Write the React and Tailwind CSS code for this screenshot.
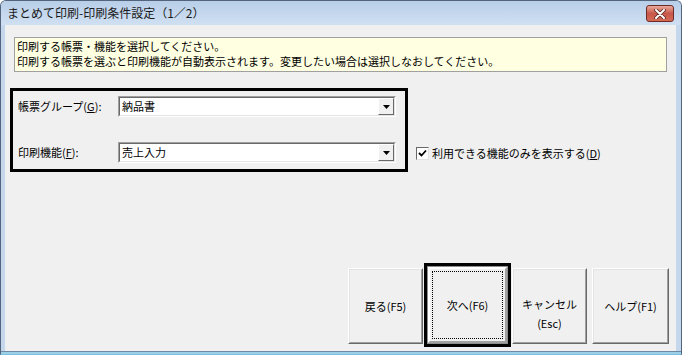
import React from 'react';

const FONT = "font-['Noto_Sans_CJK_JP','Noto_Sans',sans-serif]";

const DropButton = () => (
  <div className="w-[16px] h-[17px] flex items-center justify-center bg-[#f0f0f0] border border-t-white border-l-white border-b-[#696969] border-r-[#696969]">
    <svg width="7" height="4" viewBox="0 0 7 4">
      <polygon points="0,0 7,0 3.5,4" fill="#000" />
    </svg>
  </div>
);

const Combo = ({ value }) => (
  <div className="w-[278px] h-[21px] border border-t-[#a0a0a0] border-l-[#a0a0a0] border-b-white border-r-white">
    <div className="h-full flex items-center bg-white border border-t-[#696969] border-l-[#696969] border-b-[#e3e3e3] border-r-[#e3e3e3]">
      <span className="flex-1 pl-[2px] text-[11px] leading-[15px]">{value}</span>
      <DropButton />
    </div>
  </div>
);

const Field = ({ label, hotkey, rest, value }) => (
  <div className="flex items-center">
    <span className="w-[100px] text-[11px] leading-[15px]">
      {label}(<span className="underline">{hotkey}</span>){rest}
    </span>
    <Combo value={value} />
  </div>
);

const WinButton = ({ children, className = '' }) => (
  <div className={`w-[75px] h-[76px] mb-[3px] border border-t-white border-l-white border-b-[#696969] border-r-[#696969] ${className}`}>
    <div className="h-full bg-[#f0f0f0] border border-t-[#e3e3e3] border-l-[#e3e3e3] border-b-[#a0a0a0] border-r-[#a0a0a0] flex flex-col items-center justify-center text-[11px] leading-[19px]">
      {children}
    </div>
  </div>
);

export default function App() {
  return (
    <div className={`${FONT} w-[682px] h-[355px] flex flex-col bg-[#c4d7ed] border border-[#52657c] border-b-[#7fc0e0] rounded-t-[6px] overflow-hidden text-black`}>
      {/* タイトルバー */}
      <div className="h-[24px] flex items-center justify-between pl-[6px] pr-[7px] bg-gradient-to-b from-[#b8cee8] to-[#d0e0f2]">
        <span className="text-[12px] leading-[16px] text-[#1a1a1a]">まとめて印刷-印刷条件設定（1／2）</span>
        <div className="w-[28px] h-[17px] mt-[1px] rounded-[3px] border border-[#6e2b25] bg-gradient-to-b from-[#e9a99b] via-[#c7574a] to-[#d46a55] flex items-center justify-center">
          <svg width="12" height="10" viewBox="0 0 12 10">
            <path d="M2 1 L10 9 M10 1 L2 9" stroke="#5a2520" strokeWidth="3.6" strokeLinecap="round" />
            <path d="M2 1 L10 9 M10 1 L2 9" stroke="#fff" strokeWidth="2" strokeLinecap="round" />
          </svg>
        </div>
      </div>

      {/* 本体 */}
      <div className="flex-1 ml-[4px] mr-[5px] flex flex-col bg-[#f0f0f0]">
        <div className="mt-[12px] ml-[9px] w-[653px] h-[35px] border border-[#a0a0a0] bg-[#ffffe1] pl-[2px] pt-[1px] text-[11px] leading-[15px]">
          <div>印刷する帳票・機能を選択してください。</div>
          <div>印刷する帳票を選ぶと印刷機能が自動表示されます。変更したい場合は選択しなおしてください。</div>
        </div>

        <div className="mt-[16px] ml-[5px] flex items-end">
          <div className="w-[398px] h-[84px] border-[3px] border-black pt-[5px] pl-[5px] flex flex-col gap-[25px]">
            <Field label="帳票グループ" hotkey="G" rest=":" value="納品書" />
            <Field label="印刷機能" hotkey="F" rest=":" value="売上入力" />
          </div>
          <div className="ml-[8px] mb-[11px] flex items-center gap-[3px]">
            <div className="w-[13px] h-[13px] bg-white border border-t-[#696969] border-l-[#696969] border-b-[#e3e3e3] border-r-[#e3e3e3] flex items-center justify-center">
              <svg width="9" height="9" viewBox="0 0 9 9">
                <path d="M1 4 L3.5 6.5 L8 1.5" stroke="#000" strokeWidth="1.8" fill="none" />
              </svg>
            </div>
            <span className="text-[11px] leading-[15px]">
              利用できる機能のみを表示する(<span className="underline">D</span>)
            </span>
          </div>
        </div>

        <div className="flex-1" />

        {/* ボタン */}
        <div className="flex items-end justify-end pr-[7px] pb-[4px]">
          <WinButton>戻る(F5)</WinButton>
          <div className="ml-[1px] w-[87px] h-[84px] border-[3px] border-black">
            <div className="h-full border border-[#8e8e8e]">
              <div className="h-full bg-[#f0f0f0] border-2 border-t-white border-l-white border-b-[#a0a0a0] border-r-[#a0a0a0] p-[2px]">
                <div className="h-full border border-dotted border-black flex items-center justify-center text-[11px] leading-[19px]">
                  次へ(F6)
                </div>
              </div>
            </div>
          </div>
          <WinButton className="ml-[1px]">
            <div className="pt-[15px] flex flex-col items-center">
              <span>キャンセル</span>
              <span>(Esc)</span>
            </div>
          </WinButton>
          <WinButton className="ml-[5px] w-[77px]">ヘルプ(F1)</WinButton>
        </div>
      </div>
      <div className="h-[3px] bg-[#9ccfe8] border-t border-[#6f89a5]" />
    </div>
  );
}
